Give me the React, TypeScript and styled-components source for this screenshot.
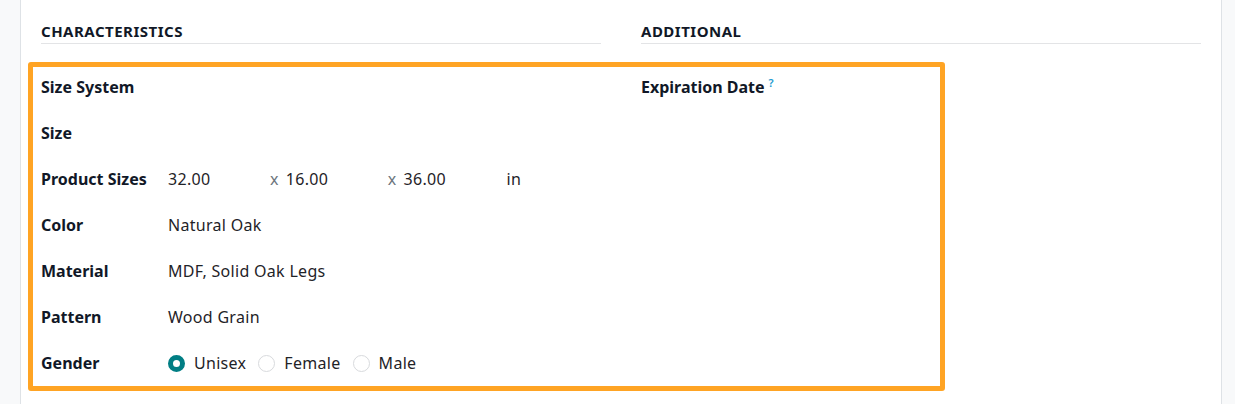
import React from 'react';
import styled, { createGlobalStyle } from 'styled-components';

const GlobalStyle = createGlobalStyle`
  html, body {
    margin: 0;
    padding: 0;
    background: #f9fafb;
  }
  body {
    font-family: "Noto Sans", "Open Sans", sans-serif;
    color: #1f2328;
  }
`;

type Field = { label: string; value?: React.ReactNode };

const Dimensions = () => (
  <DimRow>
    <DimInput>32.00</DimInput>
    <Times>x</Times>
    <DimInput>16.00</DimInput>
    <Times>x</Times>
    <DimInput>36.00</DimInput>
    <Unit>in</Unit>
  </DimRow>
);

const genders = ['Unisex', 'Female', 'Male'];

const GenderRadios = () => (
  <RadioGroup>
    {genders.map((g) => (
      <RadioOption key={g}>
        <RadioDot $checked={g === 'Unisex'} />
        {g}
      </RadioOption>
    ))}
  </RadioGroup>
);

const characteristics: Field[] = [
  { label: 'Size System' },
  { label: 'Size' },
  { label: 'Product Sizes', value: <Dimensions /> },
  { label: 'Color', value: 'Natural Oak' },
  { label: 'Material', value: 'MDF, Solid Oak Legs' },
  { label: 'Pattern', value: 'Wood Grain' },
  { label: 'Gender', value: <GenderRadios /> },
];

const App: React.FC = () => {
  return (
    <>
      <GlobalStyle />
      <Page>
        <Gutter $side="left" />
        <Sheet>
          <Groups>
            <Group>
              <GroupTitle>Characteristics</GroupTitle>
              {characteristics.map((f) => (
                <FieldRow key={f.label}>
                  <Label>{f.label}</Label>
                  <Value>{f.value}</Value>
                </FieldRow>
              ))}
            </Group>
            <Group>
              <GroupTitle>Additional</GroupTitle>
              <FieldRow>
                <Label>
                  Expiration Date<Help>?</Help>
                </Label>
                <Value />
              </FieldRow>
            </Group>
          </Groups>
          <Highlight />
        </Sheet>
        <Gutter $side="right" />
      </Page>
    </>
  );
};

const Page = styled.div`
  display: flex;
  height: 404px;
  overflow: hidden;
`;

const Gutter = styled.div<{ $side: 'left' | 'right' }>`
  flex: ${(p) => (p.$side === 'left' ? '0 0 20px' : '1 1 auto')};
  background: #f8f9fa;
  ${(p) =>
    p.$side === 'left'
      ? 'border-right: 1px solid #dee2e6;'
      : 'border-left: 1px solid #dee2e6;'}
`;

const Sheet = styled.div`
  position: relative;
  flex: 0 0 1200px;
  box-sizing: border-box;
  background: #fff;
  padding: 0 20px;
`;

const Groups = styled.div`
  display: grid;
  grid-template-columns: 560px 560px;
  column-gap: 40px;
  padding-top: 21px;
`;

const Group = styled.div`
  display: flex;
  flex-direction: column;
`;

const GroupTitle = styled.h3`
  margin: 0 0 20px;
  padding-bottom: 1px;
  font-size: 15px;
  line-height: 21px;
  font-weight: 700;
  letter-spacing: 0.5px;
  text-transform: uppercase;
  color: #111827;
  border-bottom: 1px solid #e3e4e6;
`;

const FieldRow = styled.div`
  display: grid;
  grid-template-columns: 127px 1fr;
  align-items: center;
  height: 46px;
`;

const Label = styled.div`
  font-size: 16px;
  font-weight: 700;
  color: #111827;
  white-space: nowrap;
`;

const Help = styled.sup`
  margin-left: 4px;
  font-size: 11px;
  font-weight: 600;
  color: #1b9ad0;
`;

const Value = styled.div`
  font-size: 16px;
  letter-spacing: 0.3px;
  color: #1f2328;
`;

const DimRow = styled.div`
  display: flex;
  align-items: center;
`;

const DimInput = styled.span`
  width: 95px;
`;

const Times = styled.span`
  margin: 0 7px;
  color: #6c757d;
`;

const Unit = styled.span`
  margin-left: 8px;
`;

const RadioGroup = styled.div`
  display: flex;
  align-items: center;
`;

const RadioOption = styled.label`
  display: flex;
  align-items: center;
  margin-right: 12px;
`;

const RadioDot = styled.span<{ $checked?: boolean }>`
  box-sizing: border-box;
  width: 17px;
  height: 17px;
  margin-right: 9px;
  border-radius: 50%;
  background: #fff;
  border: ${(p) => (p.$checked ? '5px solid #017e84' : '1px solid #d8dadd')};
`;

const Highlight = styled.div`
  position: absolute;
  left: 7px;
  top: 62px;
  width: 917px;
  height: 329px;
  box-sizing: border-box;
  border: 5px solid #ffa424;
  border-radius: 3px;
  pointer-events: none;
`;

export default App;
